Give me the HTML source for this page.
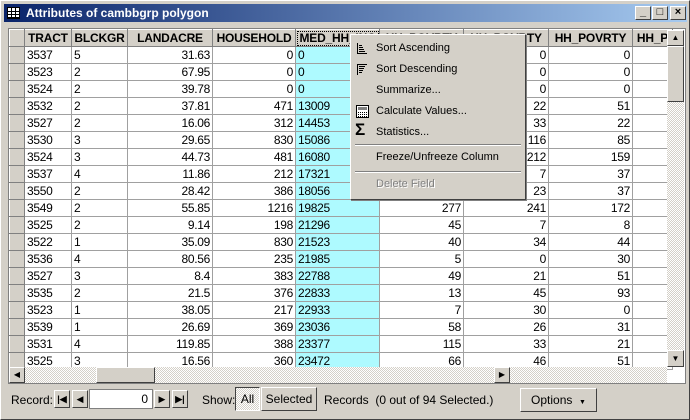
<!DOCTYPE html>
<html><head><style>
*{margin:0;padding:0;box-sizing:border-box}
body{width:690px;height:420px;overflow:hidden;background:#d4d0c8;font-family:"Liberation Sans",sans-serif;font-size:12px;position:relative}
.win{position:absolute;left:0;top:0;width:690px;height:420px;border:1px solid #fff;border-right-color:#404040;border-bottom-color:#404040;background:#d4d0c8}
.title{position:absolute;left:3px;top:3px;width:683px;height:18px;background:linear-gradient(90deg,#0a246a,#a6caf0);color:#fff;font-weight:bold;font-size:12px;line-height:18px;padding-left:22px}
.tb{position:absolute;top:5px;width:16px;height:14px;background:#d4d0c8;border:1px solid #fff;border-right-color:#404040;border-bottom-color:#404040;font-size:11px;line-height:11px;text-align:center;color:#000;font-weight:bold}
.grid{position:absolute;left:7px;top:27px;width:678px;height:356px;background:#fff;border:1px solid #808080;overflow:hidden}
table{border-collapse:collapse;position:absolute;left:0;top:0;table-layout:fixed}
td{height:17px;border-right:1px solid #a0a0a0;border-bottom:1px solid #a0a0a0;padding:0 2px;white-space:nowrap;overflow:hidden;font-size:12px;line-height:16px;letter-spacing:-0.3px}
td.r{text-align:right}
td.s{background:#d4d0c8;border:1px solid #fff;border-right-color:#808080;border-bottom-color:#808080;padding:0}
td.c{background:#aefaff}
tr.h td{background:#d4d0c8;font-weight:bold;text-align:center;border:1px solid #fff;border-right-color:#808080;border-bottom-color:#808080;height:17px;letter-spacing:-0.2px}
.menu{position:absolute;left:349px;top:33px;width:176px;height:166px;background:#d4d0c8;border:1px solid #fff;border-right-color:#404040;border-bottom-color:#404040;box-shadow:1px 1px 0 #808080}
.mi{position:absolute;left:25px;font-size:11px}
.sep{position:absolute;left:4px;width:166px;height:2px;border-top:1px solid #808080;border-bottom:1px solid #fff}
.vs{position:absolute;left:666px;top:29px;width:17px;height:337px;background:repeating-conic-gradient(#fff 0 25%,#d4d0c8 0 50%) 0 0/2px 2px}
.btn{position:absolute;background:#d4d0c8;border:1px solid #fff;border-right-color:#404040;border-bottom-color:#404040;font-size:11px;text-align:center}
.hs{position:absolute;left:8px;top:366px;width:658px;height:16px;background:repeating-conic-gradient(#fff 0 25%,#d4d0c8 0 50%) 0 0/2px 2px}
.bb{position:absolute;font-size:12px}
</style></head><body>
<div class="win">
<div class="title">Attributes of cambbgrp polygon</div>
<svg style="position:absolute;left:6px;top:6px" width="13" height="12"><rect x=".5" y=".5" width="12" height="11" fill="#fff" stroke="#000"/><path d="M1 4.5H12M1 7.5H12M1 10.5H12M4.5 1V12M8.5 1V12" stroke="#000"/></svg>
<div class="tb" style="left:634px">_</div><div class="tb" style="left:651px">□</div><div class="tb" style="left:669px">×</div>
<div class="grid">
<table>
<colgroup><col style="width:15px"><col style="width:47px"><col style="width:56px"><col style="width:85px"><col style="width:83px"><col style="width:84px"><col style="width:84px"><col style="width:85px"><col style="width:84px"><col style="width:40px"></colgroup>
<tr class="h"><td class="s"></td><td>TRACT</td><td>BLCKGR</td><td>LANDACRE</td><td>HOUSEHOLD</td><td style="outline:1px dotted #000;outline-offset:-2px">MED_HH_INC</td><td>HH_POVRTY</td><td>HH_POVRTY</td><td>HH_POVRTY</td><td>HH_P</td></tr>
<tr><td class="s"></td><td>3537</td><td>5</td><td class="r">31.63</td><td class="r">0</td><td class="c">0</td><td class="r"></td><td class="r">0</td><td class="r">0</td><td></td></tr>
<tr><td class="s"></td><td>3523</td><td>2</td><td class="r">67.95</td><td class="r">0</td><td class="c">0</td><td class="r"></td><td class="r">0</td><td class="r">0</td><td></td></tr>
<tr><td class="s"></td><td>3524</td><td>2</td><td class="r">39.78</td><td class="r">0</td><td class="c">0</td><td class="r"></td><td class="r">0</td><td class="r">0</td><td></td></tr>
<tr><td class="s"></td><td>3532</td><td>2</td><td class="r">37.81</td><td class="r">471</td><td class="c">13009</td><td class="r"></td><td class="r">22</td><td class="r">51</td><td></td></tr>
<tr><td class="s"></td><td>3527</td><td>2</td><td class="r">16.06</td><td class="r">312</td><td class="c">14453</td><td class="r"></td><td class="r">33</td><td class="r">22</td><td></td></tr>
<tr><td class="s"></td><td>3530</td><td>3</td><td class="r">29.65</td><td class="r">830</td><td class="c">15086</td><td class="r"></td><td class="r">116</td><td class="r">85</td><td></td></tr>
<tr><td class="s"></td><td>3524</td><td>3</td><td class="r">44.73</td><td class="r">481</td><td class="c">16080</td><td class="r"></td><td class="r">212</td><td class="r">159</td><td></td></tr>
<tr><td class="s"></td><td>3537</td><td>4</td><td class="r">11.86</td><td class="r">212</td><td class="c">17321</td><td class="r"></td><td class="r">7</td><td class="r">37</td><td></td></tr>
<tr><td class="s"></td><td>3550</td><td>2</td><td class="r">28.42</td><td class="r">386</td><td class="c">18056</td><td class="r"></td><td class="r">23</td><td class="r">37</td><td></td></tr>
<tr><td class="s"></td><td>3549</td><td>2</td><td class="r">55.85</td><td class="r">1216</td><td class="c">19825</td><td class="r">277</td><td class="r">241</td><td class="r">172</td><td></td></tr>
<tr><td class="s"></td><td>3525</td><td>2</td><td class="r">9.14</td><td class="r">198</td><td class="c">21296</td><td class="r">45</td><td class="r">7</td><td class="r">8</td><td></td></tr>
<tr><td class="s"></td><td>3522</td><td>1</td><td class="r">35.09</td><td class="r">830</td><td class="c">21523</td><td class="r">40</td><td class="r">34</td><td class="r">44</td><td></td></tr>
<tr><td class="s"></td><td>3536</td><td>4</td><td class="r">80.56</td><td class="r">235</td><td class="c">21985</td><td class="r">5</td><td class="r">0</td><td class="r">30</td><td></td></tr>
<tr><td class="s"></td><td>3527</td><td>3</td><td class="r">8.4</td><td class="r">383</td><td class="c">22788</td><td class="r">49</td><td class="r">21</td><td class="r">51</td><td></td></tr>
<tr><td class="s"></td><td>3535</td><td>2</td><td class="r">21.5</td><td class="r">376</td><td class="c">22833</td><td class="r">13</td><td class="r">45</td><td class="r">93</td><td></td></tr>
<tr><td class="s"></td><td>3523</td><td>1</td><td class="r">38.05</td><td class="r">217</td><td class="c">22933</td><td class="r">7</td><td class="r">30</td><td class="r">0</td><td></td></tr>
<tr><td class="s"></td><td>3539</td><td>1</td><td class="r">26.69</td><td class="r">369</td><td class="c">23036</td><td class="r">58</td><td class="r">26</td><td class="r">31</td><td></td></tr>
<tr><td class="s"></td><td>3531</td><td>4</td><td class="r">119.85</td><td class="r">388</td><td class="c">23377</td><td class="r">115</td><td class="r">33</td><td class="r">21</td><td></td></tr>
<tr><td class="s"></td><td>3525</td><td>3</td><td class="r">16.56</td><td class="r">360</td><td class="c">23472</td><td class="r">66</td><td class="r">46</td><td class="r">51</td><td></td></tr>
</table>
</div>
<div class="vs"></div>
<div class="btn" style="left:666px;top:29px;width:17px;height:16px;font-size:8px;line-height:14px">▲</div>
<div class="btn" style="left:666px;top:45px;width:17px;height:56px"></div>
<div class="btn" style="left:666px;top:349px;width:17px;height:17px;font-size:8px;line-height:15px">▼</div>
<div class="hs"></div>
<div class="btn" style="left:8px;top:366px;width:16px;height:16px;font-size:8px;line-height:14px">◀</div>
<div class="btn" style="left:95px;top:366px;width:59px;height:16px"></div>
<div class="btn" style="left:493px;top:366px;width:16px;height:16px;font-size:8px;line-height:14px">▶</div>
<div class="bb" style="left:10px;top:392px">Record:</div>
<div class="btn" style="left:53px;top:389px;width:16px;height:18px;font-size:9px;line-height:16px;font-weight:bold">|◀</div>
<div class="btn" style="left:71px;top:389px;width:16px;height:18px;font-size:9px;line-height:16px">◀</div>
<div style="position:absolute;left:88px;top:388px;width:64px;height:20px;background:#fff;border:1px solid #808080;text-align:right;padding-right:4px;line-height:18px">0</div>
<div class="btn" style="left:153px;top:389px;width:16px;height:18px;font-size:9px;line-height:16px">▶</div>
<div class="btn" style="left:171px;top:389px;width:16px;height:18px;font-size:9px;line-height:16px;font-weight:bold">▶|</div>
<div class="bb" style="left:201px;top:392px">Show:</div>
<div class="btn" style="left:234px;top:386px;width:25px;height:24px;line-height:22px;font-size:12px;border-color:#404040 #fff #fff #404040;background:repeating-conic-gradient(#fff 0 25%,#d4d0c8 0 50%) 0 0/2px 2px">All</div>
<div class="btn" style="left:260px;top:386px;width:56px;height:24px;line-height:22px;font-size:12px">Selected</div>
<div class="bb" style="left:323px;top:392px">Records&nbsp;&nbsp;(0 out of 94 Selected.)</div>
<div class="btn" style="left:519px;top:387px;width:77px;height:24px;line-height:22px;font-size:12px">Options &nbsp;<span style="font-size:7px">▼</span></div>
<div class="menu">
<svg style="position:absolute;left:5px;top:8px" width="12" height="12"><path d="M1.5 0V11M3 2.5H6M3 4.5H7M3 6.5H8M3 8.5H9M1 10.5H11" stroke="#000"/></svg>
<div class="mi" style="top:7px">Sort Ascending</div>
<svg style="position:absolute;left:5px;top:29px" width="12" height="12"><path d="M1 0.5H11M3 2.5H9M3 4.5H8M3 6.5H7M3 8.5H6M1.5 0V11" stroke="#000"/></svg>
<div class="mi" style="top:28px">Sort Descending</div>
<div class="mi" style="top:49px">Summarize...</div>
<svg style="position:absolute;left:5px;top:70px" width="13" height="13"><rect x=".5" y=".5" width="12" height="12" fill="#fff" stroke="#000"/><rect x="2" y="2" width="9" height="3" fill="#808080"/><path d="M2 7.5H11M2 9.5H11M2 11.5H11" stroke="#000" stroke-dasharray="1 1"/></svg>
<div class="mi" style="top:70px">Calculate Values...</div>
<div style="position:absolute;left:4px;top:86px;font-size:17px;font-weight:bold;line-height:18px">Σ</div>
<div class="mi" style="top:91px">Statistics...</div>
<div class="sep" style="top:109px"></div>
<div class="mi" style="top:116px">Freeze/Unfreeze Column</div>
<div class="sep" style="top:136px"></div>
<div class="mi" style="top:143px;color:#808080;text-shadow:1px 1px 0 #fff">Delete Field</div>
</div>
</div>
</body></html>
